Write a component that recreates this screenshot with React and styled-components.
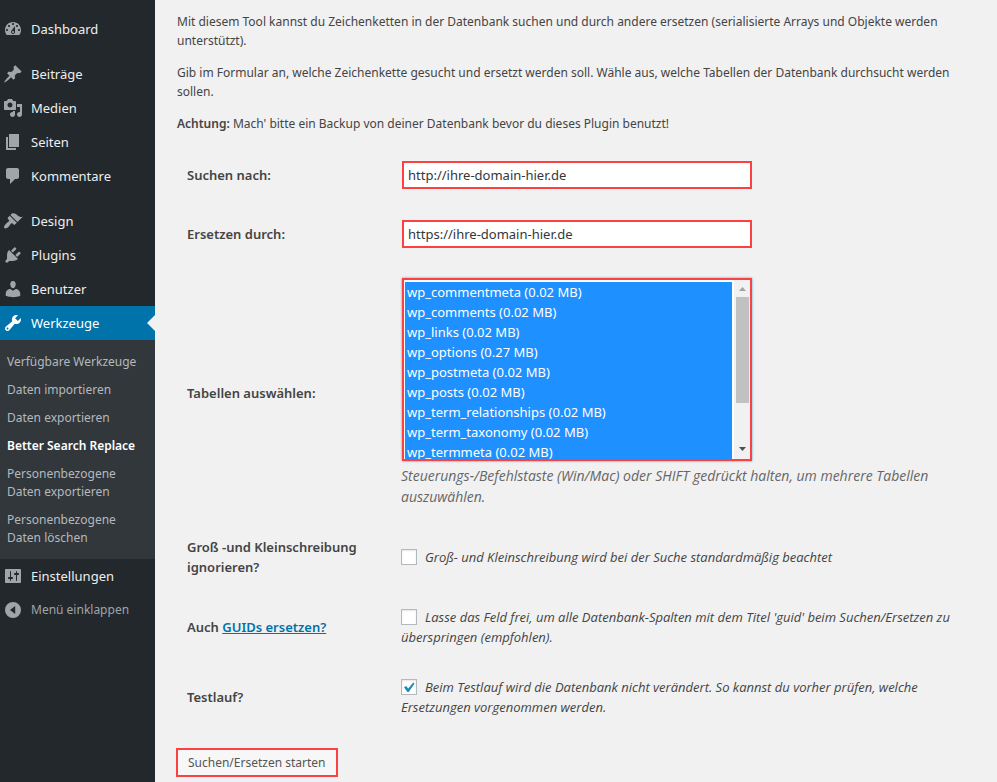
import React, { useState } from "react";
import styled, { createGlobalStyle, css } from "styled-components";

const UPRIGHT = `"Segoe UI", "Noto Sans", "Open Sans", sans-serif`;
const SLANTED = `"Segoe UI", "Open Sans", "Noto Sans", sans-serif`;

const GlobalStyle = createGlobalStyle`
  *, *::before, *::after { box-sizing: border-box; }
  body {
    margin: 0;
    background: #f1f1f1;
    color: #444;
    font-family: ${UPRIGHT};
    font-size: 12px;
    line-height: 19px;
  }
`;

const ICONS = {
  dashboard:
    "M3.76 16h12.48c1.1-1.37 1.76-3.11 1.76-5 0-4.42-3.58-8-8-8s-8 3.58-8 8c0 1.89.66 3.63 1.76 5zM10 4c.55 0 1 .45 1 1s-.45 1-1 1-1-.45-1-1 .45-1 1-1zM6 6c.55 0 1 .45 1 1s-.45 1-1 1-1-.45-1-1 .45-1 1-1zm8 0c.55 0 1 .45 1 1s-.45 1-1 1-1-.45-1-1 .45-1 1-1zm-5.37 5.55L12 7v6c0 1.1-.9 2-2 2s-2-.9-2-2c0-.57.24-1.08.63-1.45zM4 10c.55 0 1 .45 1 1s-.45 1-1 1-1-.45-1-1 .45-1 1-1zm12 0c.55 0 1 .45 1 1s-.45 1-1 1-1-.45-1-1 .45-1 1-1zm-5 3c0-.55-.45-1-1-1s-1 .45-1 1 .45 1 1 1 1-.45 1-1z",
  post: "M10.44 3.02l1.82-1.82 6.36 6.35-1.83 1.82c-1.05-.68-2.48-.57-3.41.36l-.75.75c-.92.93-1.04 2.35-.35 3.41l-1.83 1.82-2.41-2.41-2.8 2.79c-.42.42-3.38 2.71-3.8 2.29s1.86-3.39 2.28-3.81l2.79-2.79L4.1 9.36l1.83-1.82c1.05.69 2.48.57 3.4-.36l.75-.75c.93-.92 1.05-2.35.36-3.41z",
  media:
    "M13 11V4c0-.55-.45-1-1-1h-1.67L9 1H5L3.67 3H2c-.55 0-1 .45-1 1v7c0 .55.45 1 1 1h10c.55 0 1-.45 1-1zM7 4.5c1.38 0 2.5 1.12 2.5 2.5S8.38 9.5 7 9.5 4.5 8.38 4.5 7 5.62 4.5 7 4.5zM14 6h5v10.5c0 1.38-1.12 2.5-2.5 2.5S14 17.88 14 16.5s1.12-2.5 2.5-2.5c.17 0 .34.02.5.05V9h-3V6zm-4 8.05V13h2v3.5c0 1.38-1.12 2.5-2.5 2.5S7 17.88 7 16.5 8.12 14 9.5 14c.17 0 .34.02.5.05z",
  page: "M6 15V2h10v13H6zm-1 1h8v2H3V5h2v11z",
  comments:
    "M5 2h9c1.1 0 2 .9 2 2v7c0 1.1-.9 2-2 2h-2l-5 5v-5H5c-1.1 0-2-.9-2-2V4c0-1.1.9-2 2-2z",
  appearance:
    "M14.48 11.06L7.41 3.99l1.5-1.5c.5-.56 2.3-.47 3.51.32 1.21.8 1.43 1.28 2.91 2.1 1.18.64 2.45 1.26 4.45.85zm-.71.71L6.7 4.7 4.93 6.47c-.39.39-.39 1.02 0 1.41l1.06 1.06c.39.39.39 1.03 0 1.42-.6.6-1.43 1.11-2.21 1.69-.35.26-.7.53-1.01.84C1.43 14.23.4 16.08 1.4 17.07c.99 1 2.84-.03 4.18-1.36.31-.31.58-.66.85-1.02.57-.78 1.08-1.61 1.69-2.21.39-.39 1.02-.39 1.41 0l1.06 1.06c.39.39 1.02.39 1.41 0z",
  plugins:
    "M13.11 4.36L9.87 7.6 8 5.73l3.24-3.24c.35-.34 1.05-.2 1.56.32.52.51.66 1.21.31 1.55zm-8 1.77l.91-1.12 9.01 9.01-1.19.84c-.71.71-2.63 1.16-3.82 1.16H6.14L4.9 17.26c-.59.59-1.54.59-2.12 0-.59-.58-.59-1.53 0-2.12l1.24-1.24v-3.88c0-1.13.4-3.19 1.09-3.89zm7.26 3.97l3.24-3.24c.34-.35 1.04-.21 1.55.31.52.51.66 1.21.31 1.55l-3.24 3.25z",
  users:
    "M10 9.25c-2.27 0-2.73-3.44-2.73-3.44C7 4.02 7.82 2 9.97 2c2.16 0 2.98 2.02 2.71 3.81 0 0-.41 3.44-2.68 3.44zm0 2.57L12.72 10c2.39 0 4.52 2.33 4.52 4.53v2.49s-3.65 1.13-7.24 1.13c-3.65 0-7.24-1.13-7.24-1.13v-2.49c0-2.25 1.94-4.48 4.47-4.48z",
  tools:
    "M16.68 9.77c-1.34 1.34-3.3 1.67-4.95.99l-5.41 6.52c-.99.99-2.59.99-3.58 0s-.99-2.59 0-3.57l6.52-5.42c-.68-1.65-.35-3.61.99-4.95 1.28-1.28 3.12-1.62 4.72-1.06l-2.89 2.89 2.82 2.82 2.86-2.87c.53 1.58.18 3.39-1.08 4.65zM3.81 16.21c.4.39 1.04.39 1.43 0 .4-.4.4-1.04 0-1.43-.39-.4-1.03-.4-1.43 0-.39.39-.39 1.03 0 1.43z",
  settings:
    "M18 16V4c0-.55-.45-1-1-1H3c-.55 0-1 .45-1 1v12c0 .55.45 1 1 1h14c.55 0 1-.45 1-1zM8 11h1c.55 0 1 .45 1 1s-.45 1-1 1H8v1.5c0 .28-.22.5-.5.5s-.5-.22-.5-.5V13H6c-.55 0-1-.45-1-1s.45-1 1-1h1V5.5c0-.28.22-.5.5-.5s.5.22.5.5V11zm5-2h-1c-.55 0-1-.45-1-1s.45-1 1-1h1V5.5c0-.28.22-.5.5-.5s.5.22.5.5V7h1c.55 0 1 .45 1 1s-.45 1-1 1h-1v5.5c0 .28-.22.5-.5.5s-.5-.22-.5-.5V9z",
  collapse: "M10 2a8 8 0 1 0 0 16 8 8 0 0 0 0-16zM12.2 6v8L7 10z",
};

const Page = styled.div`
  display: flex;
  min-height: 100vh;
`;

const Sidebar = styled.nav`
  flex: 0 0 155px;
  padding-top: 12px;
  background: #23282d;
`;

const MenuGroup = styled.ul`
  margin: 0 0 ${(p) => (p.$last ? 0 : 11)}px;
  padding: 0;
  list-style: none;
`;

const menuEntry = css`
  display: flex;
  align-items: center;
  gap: 8px;
  width: 100%;
  height: 34px;
  padding: 0 0 0 3px;
  line-height: 18px;
  text-decoration: none;
  white-space: nowrap;
`;

const MenuLink = styled.a`
  ${menuEntry}
  position: relative;
  color: ${(p) => (p.$current ? "#fff" : "#eee")};
  font-size: 13px;
  background: ${(p) => (p.$current ? "#0073aa" : "transparent")};

  ${(p) =>
    p.$current &&
    css`
      &::after {
        content: "";
        position: absolute;
        top: 9px;
        right: 0;
        border: 8px solid transparent;
        border-left-width: 0;
        border-right-color: #f1f1f1;
      }
    `}
`;

const CollapseButton = styled.button`
  ${menuEntry}
  border: 0;
  background: none;
  color: #a0a5aa;
  font-family: inherit;
  font-size: 12px;
  cursor: pointer;
`;

const MenuIcon = styled.svg`
  flex: none;
  width: 20px;
  height: 20px;
  fill: ${(p) => (p.$current ? "#fff" : "#a0a5aa")};
`;

const SubMenu = styled.ul`
  margin: 0;
  padding: 8px 0 7px;
  list-style: none;
  background: #32373c;
`;

const SubLink = styled.a`
  display: block;
  padding: 5px 7px;
  color: ${(p) => (p.$current ? "#fff" : "#b4b9be")};
  font-size: 12px;
  font-weight: ${(p) => (p.$current ? 600 : 400)};
  line-height: 18px;
  text-decoration: none;
`;

const Main = styled.main`
  flex: 1;
  min-width: 0;
  padding: 12px 20px 5px 22px;
`;

const Intro = styled.div`
  display: flex;
  flex-direction: column;
  gap: 13px;
  margin-bottom: 12px;
`;

const Paragraph = styled.p`
  margin: 0;
`;

const Strong = styled.strong`
  font-weight: 600;
`;

const Row = styled.div`
  display: grid;
  grid-template-columns: 214px 1fr;
  align-items: center;
  min-height: 59px;
  padding: 15px 10px;
`;

const RowLabel = styled.label`
  padding-right: 10px;
  font-size: 13px;
  font-weight: 600;
  line-height: 20px;
`;

const Link = styled.a`
  color: #0073aa;
`;

const TextInput = styled.input`
  display: block;
  width: 100%;
  max-width: 350px;
  height: 28px;
  margin: 0 1px;
  padding: 1px 4px;
  border: 2px solid #fb4141;
  background: #fff;
  color: #32373c;
  font-family: inherit;
  font-size: 13px;
`;

const ListFrame = styled.div`
  display: flex;
  max-width: 350px;
  height: 183px;
  margin: 0 1px;
  border: 2px solid #fb4141;
  background: #fff;
  box-shadow: 0 0 2px rgba(30, 140, 190, 0.8);
`;

const TableSelect = styled.select`
  flex: 1;
  min-width: 0;
  height: 100%;
  padding: 2px 2px 0 1px;
  border: 0;
  border-radius: 0;
  outline: 0;
  background: #fff;
  font-family: inherit;
  font-size: 13px;
  scrollbar-width: none;

  option {
    height: 20px;
    min-height: 20px;
    padding: 1px 2px 0;
    line-height: 20px;
  }

  option:checked {
    background: linear-gradient(#1e90ff, #1e90ff);
    -webkit-text-fill-color: #fff;
  }
`;

const Scrollbar = styled.div`
  display: flex;
  flex: 0 0 16px;
  flex-direction: column;
  background: #f1f1f1;
`;

const ScrollArrow = styled.svg`
  display: block;
  width: 16px;
  height: 17px;
  fill: ${(p) => (p.$active ? "#505050" : "#a3a3a3")};
`;

const ScrollTrack = styled.div`
  position: relative;
  flex: 1;
  margin: 0 1px 0 2px;
`;

const ScrollThumb = styled.div`
  position: absolute;
  left: 0;
  right: 0;
  height: 73%;
  background: #c1c1c1;
`;

const Description = styled.p`
  margin: 4px 0 0;
  color: #666;
  font-family: ${SLANTED};
  font-size: 14px;
  font-style: italic;
  line-height: 21px;
`;

const CheckText = styled.label`
  display: block;
  font-family: ${SLANTED};
  font-size: 13px;
  font-style: italic;
  line-height: 20px;
`;

const Checkbox = styled.input`
  appearance: none;
  width: 16px;
  height: 16px;
  margin: -4px 8px 0 0;
  border: 1px solid #b4b9be;
  background: #fff;
  box-shadow: inset 0 1px 2px rgba(0, 0, 0, 0.1);
  vertical-align: middle;

  &:checked {
    background: #fff
      url("data:image/svg+xml,%3Csvg xmlns='http://www.w3.org/2000/svg' width='14' height='14'%3E%3Cpath d='M2 7.2l2.2-1.3 2 2.6L11.2 2.6l1.4 1L6.8 12H5.4z' fill='%231e8cbe'/%3E%3C/svg%3E")
      center no-repeat;
  }
`;

const SubmitButton = styled.button`
  display: block;
  height: 29px;
  margin: 16px 0 0 -1px;
  padding: 0 10px;
  border: 2px solid #fb4141;
  background: #f7f7f7;
  color: #555;
  font-family: inherit;
  font-size: 12px;
  line-height: 25px;
  cursor: pointer;
`;

const CONTENT_GROUP = [
  { icon: "post", label: "Beiträge" },
  { icon: "media", label: "Medien" },
  { icon: "page", label: "Seiten" },
  { icon: "comments", label: "Kommentare" },
];

const ADMIN_GROUP = [
  { icon: "appearance", label: "Design" },
  { icon: "plugins", label: "Plugins" },
  { icon: "users", label: "Benutzer" },
  {
    icon: "tools",
    label: "Werkzeuge",
    current: true,
    children: [
      "Verfügbare Werkzeuge",
      "Daten importieren",
      "Daten exportieren",
      "Better Search Replace",
      "Personenbezogene Daten exportieren",
      "Personenbezogene Daten löschen",
    ],
  },
  { icon: "settings", label: "Einstellungen" },
];

const CURRENT_PAGE = "Better Search Replace";

const TABLES = [
  "wp_commentmeta (0.02 MB)",
  "wp_comments (0.02 MB)",
  "wp_links (0.02 MB)",
  "wp_options (0.27 MB)",
  "wp_postmeta (0.02 MB)",
  "wp_posts (0.02 MB)",
  "wp_term_relationships (0.02 MB)",
  "wp_term_taxonomy (0.02 MB)",
  "wp_termmeta (0.02 MB)",
  "wp_terms (0.02 MB)",
  "wp_usermeta (0.02 MB)",
  "wp_users (0.02 MB)",
];

function Icon({ name, current }) {
  return (
    <MenuIcon viewBox="0 0 20 20" aria-hidden="true" $current={current}>
      <path d={ICONS[name]} fillRule="evenodd" />
    </MenuIcon>
  );
}

function MenuItem({ icon, label, current, children }) {
  return (
    <li>
      <MenuLink href="#" $current={current}>
        <Icon name={icon} current={current} />
        {label}
      </MenuLink>
      {children && (
        <SubMenu>
          {children.map((text) => (
            <li key={text}>
              <SubLink href="#" $current={text === CURRENT_PAGE}>
                {text}
              </SubLink>
            </li>
          ))}
        </SubMenu>
      )}
    </li>
  );
}

function TableList({ id }) {
  const [offset, setOffset] = useState(0);

  const followScroll = (event) => {
    const { scrollTop, scrollHeight } = event.currentTarget;
    setOffset((scrollTop / scrollHeight) * 100);
  };

  return (
    <ListFrame>
      <TableSelect id={id} multiple defaultValue={TABLES} onScroll={followScroll}>
        {TABLES.map((table) => (
          <option key={table} value={table}>
            {table}
          </option>
        ))}
      </TableSelect>
      <Scrollbar aria-hidden="true">
        <ScrollArrow viewBox="0 0 16 17" $active={offset > 0}>
          <path d="M5 11h7L8.5 7z" />
        </ScrollArrow>
        <ScrollTrack>
          <ScrollThumb style={{ top: `${offset}%` }} />
        </ScrollTrack>
        <ScrollArrow viewBox="0 0 16 17" $active>
          <path d="M5 5h7L8.5 9z" />
        </ScrollArrow>
      </Scrollbar>
    </ListFrame>
  );
}

function CheckRow({ id, label, text, checked }) {
  return (
    <Row>
      <RowLabel htmlFor={id}>{label}</RowLabel>
      <CheckText>
        <Checkbox id={id} type="checkbox" defaultChecked={checked} />
        {text}
      </CheckText>
    </Row>
  );
}

export default function App() {
  return (
    <>
      <GlobalStyle />
      <Page>
        <Sidebar>
          <MenuGroup>
            <MenuItem icon="dashboard" label="Dashboard" />
          </MenuGroup>
          <MenuGroup>
            {CONTENT_GROUP.map((item) => (
              <MenuItem key={item.label} {...item} />
            ))}
          </MenuGroup>
          <MenuGroup $last>
            {ADMIN_GROUP.map((item) => (
              <MenuItem key={item.label} {...item} />
            ))}
          </MenuGroup>
          <CollapseButton type="button">
            <Icon name="collapse" />
            Menü einklappen
          </CollapseButton>
        </Sidebar>
        <Main>
          <Intro>
            <Paragraph>
              Mit diesem Tool kannst du Zeichenketten in der Datenbank suchen und durch andere
              ersetzen (serialisierte Arrays und Objekte werden unterstützt).
            </Paragraph>
            <Paragraph>
              Gib im Formular an, welche Zeichenkette gesucht und ersetzt werden soll. Wähle aus,
              welche Tabellen der Datenbank durchsucht werden sollen.
            </Paragraph>
            <Paragraph>
              <Strong>Achtung:</Strong> Mach' bitte ein Backup von deiner Datenbank bevor du
              dieses Plugin benutzt!
            </Paragraph>
          </Intro>
          <form onSubmit={(event) => event.preventDefault()}>
            <Row>
              <RowLabel htmlFor="search-for">Suchen nach:</RowLabel>
              <TextInput id="search-for" type="text" defaultValue="http://ihre-domain-hier.de" />
            </Row>
            <Row>
              <RowLabel htmlFor="replace-with">Ersetzen durch:</RowLabel>
              <TextInput
                id="replace-with"
                type="text"
                defaultValue="https://ihre-domain-hier.de"
              />
            </Row>
            <Row>
              <RowLabel htmlFor="select-tables">Tabellen auswählen:</RowLabel>
              <div>
                <TableList id="select-tables" />
                <Description>
                  Steuerungs-/Befehlstaste (Win/Mac) oder SHIFT gedrückt halten, um mehrere
                  Tabellen auszuwählen.
                </Description>
              </div>
            </Row>
            <CheckRow
              id="case-insensitive"
              label="Groß -und Kleinschreibung ignorieren?"
              text="Groß- und Kleinschreibung wird bei der Suche standardmäßig beachtet"
            />
            <CheckRow
              id="replace-guids"
              label={
                <>
                  Auch <Link href="#">GUIDs ersetzen?</Link>
                </>
              }
              text="Lasse das Feld frei, um alle Datenbank-Spalten mit dem Titel 'guid' beim Suchen/Ersetzen zu überspringen (empfohlen)."
            />
            <CheckRow
              id="dry-run"
              label="Testlauf?"
              text="Beim Testlauf wird die Datenbank nicht verändert. So kannst du vorher prüfen, welche Ersetzungen vorgenommen werden."
              checked
            />
            <SubmitButton type="submit">Suchen/Ersetzen starten</SubmitButton>
          </form>
        </Main>
      </Page>
    </>
  );
}
